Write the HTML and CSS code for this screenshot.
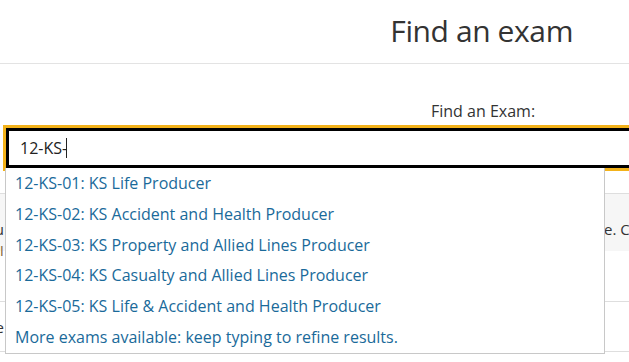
FILE: index.html
```html
<!DOCTYPE html>
<html lang="en">
<head>
  <meta charset="UTF-8">
  <title>Find an exam</title>
  <link rel="stylesheet" href="styles.css">
</head>
<body>
  <header class="page-header">
    <h1 class="page-title">Find an exam</h1>
  </header>
  <main class="search">
    <label class="search-label" for="exam">Find an Exam:</label>
    <div class="search-box">
      <input class="search-input" id="exam" type="text" value="12-KS-" autocomplete="off">
      <span class="caret"></span>
      <ul class="suggest">
        <li>12-KS-01: KS Life Producer</li>
        <li>12-KS-02: KS Accident and Health Producer</li>
        <li>12-KS-03: KS Property and Allied Lines Producer</li>
        <li>12-KS-04: KS Casualty and Allied Lines Producer</li>
        <li>12-KS-05: KS Life &amp; Accident and Health Producer</li>
        <li class="suggest-more">More exams available: keep typing to refine results.</li>
      </ul>
    </div>
    <table class="results">
      <tr class="results-head">
        <td class="c-left"></td>
        <td class="c-main"></td>
      </tr>
      <tr class="results-shade">
        <td class="c-left"><div class="cell-lines">Menu<br><span class="hl">UI</span></div></td>
        <td class="c-main"><span class="note-lead">Select the exam you wish to schedule from the list abov</span><span>e. Continue</span></td>
      </tr>
      <tr class="results-row">
        <td class="c-left"></td>
        <td class="c-main"></td>
      </tr>
      <tr class="results-row">
        <td class="c-left">Exce</td>
        <td class="c-main"></td>
      </tr>
    </table>
  </main>
</body>
</html>
```

FILE: styles.css
```css
html, body {
  margin: 0;
  overflow: hidden;
}
body {
  font-family: "Open Sans", "Noto Sans", sans-serif;
  background-color: #fff;
  color: #333;
  width: 629px;
  height: 362px;
}
.page-header {
  height: 63px;
  border-bottom: 1px solid #e3e3e3;
  display: flex;
  justify-content: flex-end;
  padding-right: 56px;
}
.page-title {
  margin: 0;
  padding-top: 10px;
  font-size: 30px;
  font-weight: normal;
  color: #333;
  letter-spacing: -0.4px;
}
.search {
  position: relative;
}
.search-label {
  display: block;
  box-sizing: border-box;
  height: 64px;
  padding: 36px 0 0 431px;
  font-size: 16px;
  color: #333;
}
.search-box {
  position: relative;
  margin-left: 6px;
  width: 700px;
}
.search-input {
  display: block;
  box-sizing: border-box;
  width: 100%;
  height: 40px;
  margin: 0;
  padding: 0 11px;
  border: 3px solid #000;
  outline: 3px solid #f3b21a;
  font-family: "Open Sans", sans-serif;
  font-size: 16px;
  color: #222;
  background: #fff;
}
.caret {
  position: absolute;
  left: 60px;
  top: 10px;
  width: 1px;
  height: 20px;
  background: #222;
}
.suggest {
  position: absolute;
  z-index: 2;
  top: 40px;
  left: -1px;
  width: 598px;
  height: 185px;
  margin: 0;
  padding: 0;
  list-style: none;
  background: #fff;
  border: 1px solid #c8c8c8;
  border-top: 0;
}
.suggest li {
  height: 30.8px;
  line-height: 30px;
  padding-left: 9px;
  font-size: 16px;
  color: #1a6a9a;
  white-space: nowrap;
}
.results {
  table-layout: fixed;
  width: 774px;
  margin-top: 3px;
  margin-left: -60px;
  border-collapse: collapse;
  font-size: 15px;
}
.results td {
  padding: 0;
  vertical-align: top;
  white-space: nowrap;
}
.results-head td {
  height: 22px;
  border-bottom: 1px solid #dedede;
}
.results-shade td {
  background-color: #f6f6f6;
  height: 57px;
  padding-top: 25px;
  box-sizing: border-box;
}
.cell-lines {
  height: 32px;
  line-height: 21px;
}
.results-row td {
  height: 50px;
  border-bottom: 1px solid #dedede;
  padding-top: 15px;
  box-sizing: border-box;
}
.c-left {
  width: 64px;
  text-align: right;
}
.c-main {
  width: 710px;
}
.results .c-main {
  padding-left: 10px;
}
.note-lead {
  display: inline-block;
  width: 590px;
  text-align: right;
}
.hl {
  color: #8a6d3b;
}
```
